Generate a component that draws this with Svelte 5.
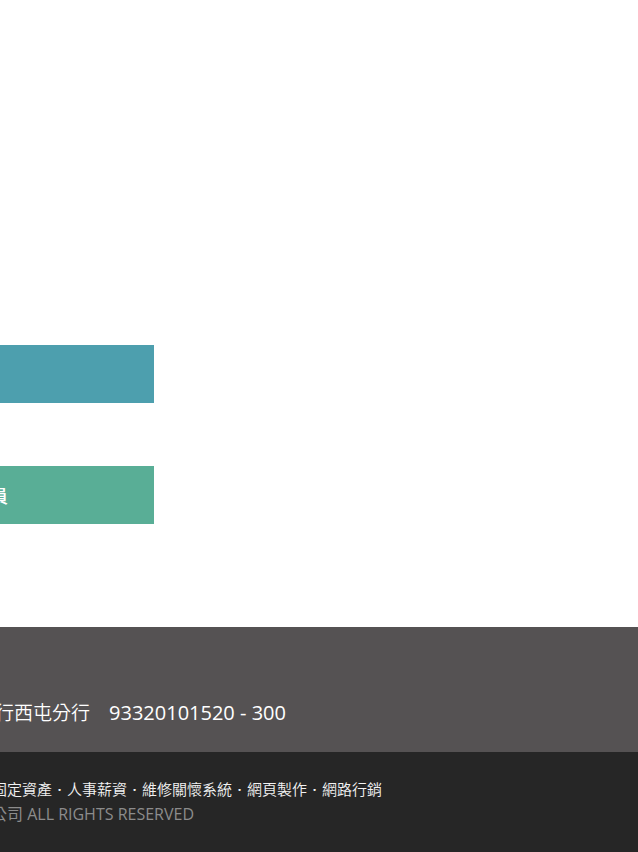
<script>
  const services = ['固定資產', '人事薪資', '維修關懷系統', '網頁製作', '網路行銷'];
</script>

<div class="page">
  <main>
    <button class="action blue" type="button" aria-label="登入"></button>
    <button class="action green" type="button">員</button>
  </main>
  <footer>
    <section class="bank">
      <p>行西屯分行　<span>93320101520 - 300</span></p>
    </section>
    <section class="legal">
      <p class="services">
        {#each services as service, i}{#if i > 0}<span class="dot">·</span>{/if}<span>{service}</span>{/each}
      </p>
      <p class="copyright">公司 ALL RIGHTS RESERVED</p>
    </section>
  </footer>
</div>

<style>
  :global(body) {
    margin: 0;
    background: #fff;
  }
  .page {
    overflow: hidden;
    font-family: "Noto Sans CJK TC", sans-serif;
    color: #fff;
  }
  main {
    display: flex;
    flex-direction: column;
    align-items: flex-start;
    gap: 63px;
    padding: 345px 0 103px;
  }
  .action {
    width: 154px;
    height: 58px;
    margin: 0;
    padding: 0;
    border: 0;
    font: 500 18px/58px "Noto Sans CJK TC", sans-serif;
    color: #fff;
    text-align: left;
    text-indent: -10px;
    cursor: pointer;
  }
  .blue {
    background: #4d9fae;
  }
  .green {
    background: #59ae96;
  }
  p {
    margin: 0;
    white-space: nowrap;
  }
  .bank {
    padding: 70px 0 24px;
    background: #555253;
  }
  .bank p {
    margin-left: -5px;
    font-size: 19px;
    font-weight: 350;
    line-height: 30px;
  }
  .bank span {
    font-family: "Open Sans", sans-serif;
    font-size: 20px;
    font-weight: 400;
  }
  .legal {
    padding: 24px 0 25px;
    background: #262626;
  }
  .legal p {
    margin-left: -8px;
    line-height: 26px;
  }
  .services {
    display: flex;
    font-size: 15px;
    font-weight: 350;
    color: #f2f2f2;
  }
  .dot {
    width: 15px;
    font-family: "Open Sans", sans-serif;
    font-weight: 600;
    text-align: center;
  }
  .legal .copyright {
    margin-left: -9px;
    font-family: "Open Sans", "Noto Sans CJK TC", sans-serif;
    font-size: 16px;
    line-height: 25px;
    color: #8c8c8c;
  }
</style>
